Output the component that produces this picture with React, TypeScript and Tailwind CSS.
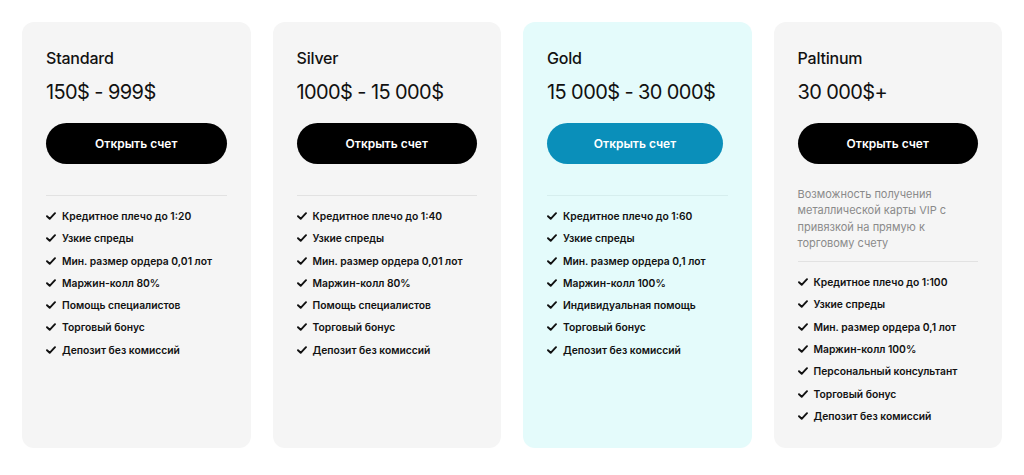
import React from "react";

type Plan = {
  name: string;
  price: string;
  features: string[];
  gold?: boolean;
  desc?: string;
};

const plans: Plan[] = [
  {
    name: "Standard",
    price: "150$ - 999$",
    features: [
      "Кредитное плечо до 1:20",
      "Узкие спреды",
      "Мин. размер ордера 0,01 лот",
      "Маржин-колл 80%",
      "Помощь специалистов",
      "Торговый бонус",
      "Депозит без комиссий",
    ],
  },
  {
    name: "Silver",
    price: "1000$ - 15 000$",
    features: [
      "Кредитное плечо до 1:40",
      "Узкие спреды",
      "Мин. размер ордера 0,01 лот",
      "Маржин-колл 80%",
      "Помощь специалистов",
      "Торговый бонус",
      "Депозит без комиссий",
    ],
  },
  {
    name: "Gold",
    price: "15 000$ - 30 000$",
    gold: true,
    features: [
      "Кредитное плечо до 1:60",
      "Узкие спреды",
      "Мин. размер ордера 0,1 лот",
      "Маржин-колл 100%",
      "Индивидуальная помощь",
      "Торговый бонус",
      "Депозит без комиссий",
    ],
  },
  {
    name: "Paltinum",
    price: "30 000$+",
    desc: "Возможность получения металлической карты VIP с привязкой на прямую к торговому счету",
    features: [
      "Кредитное плечо до 1:100",
      "Узкие спреды",
      "Мин. размер ордера 0,1 лот",
      "Маржин-колл 100%",
      "Персональный консультант",
      "Торговый бонус",
      "Депозит без комиссий",
    ],
  },
];

function Check() {
  return (
    <svg width="10" height="8" viewBox="0 0 10 8" fill="none" className="shrink-0">
      <path d="M1 4.2 L3.7 6.8 L9 1.2" stroke="#111" strokeWidth="1.9" strokeLinecap="round" strokeLinejoin="round" />
    </svg>
  );
}

function Card({ p }: { p: Plan }) {
  return (
    <div className={`rounded-[12px] px-6 pt-6 flex flex-col ${p.gold ? "bg-[#e4fbfb]" : "bg-[#f5f5f5]"}`}>
      <div className="text-[16px] leading-6 font-medium text-[#111] tracking-[-0.2px]">{p.name}</div>
      <div className="mt-2 text-[20px] leading-7 font-normal text-[#111] tracking-[-0.6px]">{p.price}</div>
      <button
        className={`mt-[17px] h-[41px] rounded-full text-white text-[12px] font-semibold ${p.gold ? "bg-[#0a8fba] w-[176px]" : "bg-black w-full"}`}
      >
        Открыть счет
      </button>
      {p.desc ? (
        <>
          <div className="mt-[22px] text-[11px] leading-[16.3px] text-[#8a8a8a] pr-2">{p.desc}</div>
          <div className="mt-[10px] h-px bg-[#e2e2e2]" />
        </>
      ) : (
        <div className={`mt-[31px] h-px ${p.gold ? "bg-[#d6eeee]" : "bg-[#e2e2e2]"}`} />
      )}
      <div className="mt-3 flex flex-col gap-[6.3px]">
        {p.features.map((f) => (
          <div key={f} className="flex items-center gap-[6px] h-4">
            <Check />
            <span className="text-[10.3px] leading-4 font-semibold text-[#111]">{f}</span>
          </div>
        ))}
      </div>
    </div>
  );
}

export default function App() {
  return (
    <div className="w-[1024px] h-[475px] bg-white pt-[22px] px-[22px]" style={{ fontFamily: "Inter, 'Noto Sans', sans-serif" }}>
      <div className="grid grid-cols-4 gap-[22px] h-[426px]">
        {plans.map((p) => (
          <Card key={p.name} p={p} />
        ))}
      </div>
    </div>
  );
}
